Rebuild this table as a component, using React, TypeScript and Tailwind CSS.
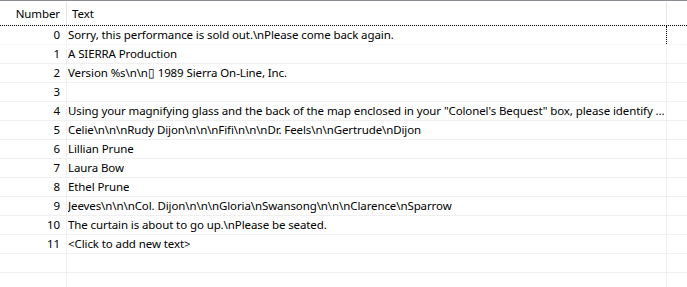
import React from 'react';

type Row = { id: number; text: string };

const rows: Row[] = [
  { id: 0, text: 'Sorry, this performance is sold out.\\nPlease come back again.' },
  { id: 1, text: 'A SIERRA Production' },
  { id: 2, text: 'Version %s\\n\\n\u25AF 1989 Sierra On-Line, Inc.' },
  { id: 3, text: '' },
  {
    id: 4,
    text: 'Using your magnifying glass and the back of the map enclosed in your "Colonel\'s Bequest" box, please identify ...',
  },
  { id: 5, text: 'Celie\\n\\n\\nRudy Dijon\\n\\n\\nFifi\\n\\n\\nDr. Feels\\n\\nGertrude\\nDijon' },
  { id: 6, text: 'Lillian Prune' },
  { id: 7, text: 'Laura Bow' },
  { id: 8, text: 'Ethel Prune' },
  { id: 9, text: 'Jeeves\\n\\n\\nCol. Dijon\\n\\n\\nGloria\\nSwansong\\n\\n\\nClarence\\nSparrow' },
  { id: 10, text: 'The curtain is about to go up.\\nPlease be seated.' },
  { id: 11, text: '<Click to add new text>' },
];

const App: React.FC = () => {
  return (
    <div
      className="h-[287px] w-[687px] overflow-hidden bg-white text-[11.5px] tracking-[-0.1px] text-black"
      style={{ fontFamily: '"Noto Sans", "Segoe UI", sans-serif' }}
    >
      {/* Header */}
      <div className="flex h-[25px] border-t border-[#8a8e93]">
        <div className="flex w-[66px] items-center justify-end pr-[6px] pt-px">Number</div>
        <div className="mt-px w-px bg-[#e5e5e5]" />
        <div className="flex w-[599px] items-center pl-[5px] pt-px">Text</div>
        <div className="mt-px w-px bg-[#e5e5e5]" />
        <div className="flex-1" />
      </div>

      {/* Rows */}
      {rows.map((r) => {
        const focused = r.id === 0;
        return (
          <div
            key={r.id}
            className={
              focused
                ? 'flex h-[20px] border-b border-t border-b-[#f0f0f0] border-t-black border-dotted'
                : 'flex h-[19px] border-b border-[#f0f0f0]'
            }
          >
            <div className="flex w-[66px] items-center justify-end pr-[6px]">{r.id}</div>
            <div className="w-px bg-[#f0f0f0]" />
            <div className="flex w-[599px] items-center overflow-hidden whitespace-nowrap pl-px">
              <span className="truncate">{r.text}</span>
            </div>
            <div className={focused ? 'w-px border-r border-dotted border-black' : 'w-px bg-[#f0f0f0]'} />
            <div className="flex-1" />
          </div>
        );
      })}
      {[0, 1].map((i) => (
        <div key={'e' + i} className="flex h-[19px] border-b border-[#f0f0f0]">
          <div className="w-[66px]" />
          <div className="w-px bg-[#f0f0f0]" />
          <div className="w-[599px]" />
          <div className="w-px bg-[#f0f0f0]" />
          <div className="flex-1" />
        </div>
      ))}
    </div>
  );
};

export default App;
